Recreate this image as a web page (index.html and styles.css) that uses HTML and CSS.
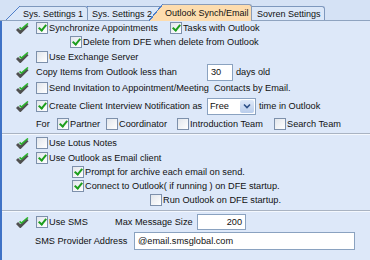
FILE: index.html
```html
<!DOCTYPE html>
<html>
<head>
<meta charset="utf-8">
<link rel="stylesheet" href="styles.css">
</head>
<body>
<div class="tabs">
  <div class="tab t1">Sys. Settings 1</div>
  <div class="tab t2">Sys. Settings 2</div>
  <div class="tab t3 active">Outlook Synch/Email</div>
  <div class="tab t4">Sovren Settings</div>
</div>
<div class="panel">
  <div class="row h14 lead">
    <span class="mark"><svg width="13" height="11" viewBox="0 0 13 11"><path d="M1 6 L4.3 9.3 L11.5 2.2" stroke="#505050" stroke-width="3" fill="none"/><path d="M3.6 4.4 L5.4 6.2 L12 0.5" stroke="#2db42d" stroke-width="1.6" fill="none"/></svg></span>
    <label class="chk w134"><span class="cb on"></span>Synchronize Appointments</label>
    <label class="chk"><span class="cb on"></span>Tasks with Outlook</label>
  </div>
  <div class="row h14 in70">
    <label class="chk"><span class="cb on"></span>Delete from DFE when delete from Outlook</label>
  </div>
  <div class="row h16 lead">
    <span class="mark"><svg width="13" height="11" viewBox="0 0 13 11"><path d="M1 6 L4.3 9.3 L11.5 2.2" stroke="#505050" stroke-width="3" fill="none"/><path d="M3.6 4.4 L5.4 6.2 L12 0.5" stroke="#2db42d" stroke-width="1.6" fill="none"/></svg></span>
    <label class="chk"><span class="cb"></span>Use Exchange Server</label>
  </div>
  <div class="row h14 lead">
    <span class="mark"><svg width="13" height="11" viewBox="0 0 13 11"><path d="M1 6 L4.3 9.3 L11.5 2.2" stroke="#505050" stroke-width="3" fill="none"/><path d="M3.6 4.4 L5.4 6.2 L12 0.5" stroke="#2db42d" stroke-width="1.6" fill="none"/></svg></span>
    <span class="txt w171">Copy Items from Outlook less than</span>
    <span class="field w26">30</span>
    <span class="txt after">days old</span>
  </div>
  <div class="row h18 lead">
    <span class="mark"><svg width="13" height="11" viewBox="0 0 13 11"><path d="M1 6 L4.3 9.3 L11.5 2.2" stroke="#505050" stroke-width="3" fill="none"/><path d="M3.6 4.4 L5.4 6.2 L12 0.5" stroke="#2db42d" stroke-width="1.6" fill="none"/></svg></span>
    <label class="chk"><span class="cb"></span>Send Invitation to Appointment/Meeting&nbsp; Contacts by Email.</label>
  </div>
  <div class="row h18 lead">
    <span class="mark"><svg width="13" height="11" viewBox="0 0 13 11"><path d="M1 6 L4.3 9.3 L11.5 2.2" stroke="#505050" stroke-width="3" fill="none"/><path d="M3.6 4.4 L5.4 6.2 L12 0.5" stroke="#2db42d" stroke-width="1.6" fill="none"/></svg></span>
    <label class="chk w171"><span class="cb on"></span>Create Client Interview Notification as</label>
    <span class="select"><span class="sel-val">Free</span><span class="sel-btn"><svg width="8" height="6" viewBox="0 0 8 6"><path d="M1 1.5 L4 4.5 L7 1.5" stroke="#2d4f86" stroke-width="1.6" fill="none"/></svg></span></span>
    <span class="txt after">time in Outlook</span>
  </div>
  <div class="row h18 in36">
    <span class="txt w21">For</span>
    <label class="chk w49"><span class="cb on"></span>Partner</label>
    <label class="chk w71"><span class="cb"></span>Coordinator</label>
    <label class="chk w97"><span class="cb"></span>Introduction Team</label>
    <label class="chk"><span class="cb"></span>Search Team</label>
  </div>
  <div class="sep"></div>
  <div class="row h16 lead">
    <span class="mark"><svg width="13" height="11" viewBox="0 0 13 11"><path d="M1 6 L4.3 9.3 L11.5 2.2" stroke="#505050" stroke-width="3" fill="none"/><path d="M3.6 4.4 L5.4 6.2 L12 0.5" stroke="#2db42d" stroke-width="1.6" fill="none"/></svg></span>
    <label class="chk"><span class="cb"></span>Use Lotus Notes</label>
  </div>
  <div class="row h14 lead">
    <span class="mark"><svg width="13" height="11" viewBox="0 0 13 11"><path d="M1 6 L4.3 9.3 L11.5 2.2" stroke="#505050" stroke-width="3" fill="none"/><path d="M3.6 4.4 L5.4 6.2 L12 0.5" stroke="#2db42d" stroke-width="1.6" fill="none"/></svg></span>
    <label class="chk"><span class="cb on"></span>Use Outlook as Email client</label>
  </div>
  <div class="row h14 in72">
    <label class="chk"><span class="cb on"></span>Prompt for archive each email on send.</label>
  </div>
  <div class="row h14 in72">
    <label class="chk"><span class="cb on"></span>Connect to Outlook( if running ) on DFE startup.</label>
  </div>
  <div class="row h14 in150">
    <label class="chk"><span class="cb"></span>Run Outlook on DFE startup.</label>
  </div>
  <div class="sep gap"></div>
  <div class="row h20 lead">
    <span class="mark"><svg width="13" height="11" viewBox="0 0 13 11"><path d="M1 6 L4.3 9.3 L11.5 2.2" stroke="#505050" stroke-width="3" fill="none"/><path d="M3.6 4.4 L5.4 6.2 L12 0.5" stroke="#2db42d" stroke-width="1.6" fill="none"/></svg></span>
    <label class="chk w79"><span class="cb on"></span>Use SMS</label>
    <span class="txt w82">Max Message Size</span>
    <span class="field w49 num">200</span>
  </div>
  <div class="row h18 in35">
    <span class="txt w99">SMS Provider Address</span>
    <span class="field w221 tall">@email.smsglobal.com</span>
  </div>
</div>
</body>
</html>
```
FILE: styles.css
```css
html, body {
  margin: 0;
  padding: 0;
}
body {
  width: 370px;
  height: 260px;
  overflow: hidden;
  background: #dde8f9;
  font-family: "Liberation Sans", Arial, sans-serif;
  font-size: 9.2px;
  color: #111;
}
.tabs {
  display: flex;
  align-items: flex-end;
  height: 21px;
  box-sizing: border-box;
  padding-left: 20px;
  background: #d5e2f5;
  border-bottom: 1px solid #8ea3c0;
  font-size: 9px;
}
.tab {
  position: relative;
  height: 14px;
  line-height: 14px;
  box-sizing: border-box;
  border: 1px solid #7e98bd;
  border-left: none;
  border-bottom: none;
  border-radius: 0 3px 0 0;
  background: #dbe7f8;
  white-space: nowrap;
  color: #111;
}
.tab::before {
  content: "";
  position: absolute;
  left: -14px;
  top: -1px;
  bottom: 0;
  width: 14px;
  background: linear-gradient(to bottom right, transparent calc(50% - 0.7px), #4f7fc9 calc(50% - 0.7px), #4f7fc9 calc(50% + 0.5px), #dbe7f8 calc(50% + 0.5px));
}
.t1 { width: 68px; padding-left: 3px; z-index: 4; }
.t2 { width: 75px; padding-left: 4px; z-index: 3; }
.t3 { width: 89px; padding-left: 2px; z-index: 6; }
.t4 { width: 73px; padding-left: 5px; z-index: 2; }
.tab.active {
  height: 17px;
  line-height: 16px;
  margin-bottom: -1px;
  background: #fddcae;
  border-color: #8a9cb8;
}
.tab.active::before {
  background: linear-gradient(to bottom right, transparent calc(50% - 0.7px), #4f7fc9 calc(50% - 0.7px), #4f7fc9 calc(50% + 0.5px), #fddcae calc(50% + 0.5px));
}
.panel {
  border-left: 2px solid #3f72c6;
  min-height: 239px;
  background: #dde8f9;
}
.row {
  display: flex;
  align-items: center;
  white-space: nowrap;
}
.h14 { height: 14px; }
.h16 { height: 16px; }
.h18 { height: 18px; }
.h20 { height: 20px; }
.lead { padding-left: 14px; }
.in70 { padding-left: 68px; }
.in72 { padding-left: 70px; }
.in150 { padding-left: 148px; }
.in36 { padding-left: 34px; }
.in35 { padding-left: 33px; }
.mark {
  width: 13px;
  height: 11px;
  margin-right: 7px;
  display: flex;
}
.chk {
  display: flex;
  align-items: center;
  flex: none;
}
.cb {
  position: relative;
  width: 12px;
  height: 12px;
  box-sizing: border-box;
  border: 1px solid #7d90ab;
  background: linear-gradient(135deg, #e2e6ec, #ffffff);
  margin-right: 1px;
  flex: none;
}
.cb.on::after {
  content: "";
  position: absolute;
  left: 3px;
  top: 0px;
  width: 3px;
  height: 6px;
  border: solid #1d9e1d;
  border-width: 0 2px 2px 0;
  transform: rotate(40deg);
}
.txt { flex: none; }
.after { margin-left: 3px; }
.w21 { width: 21px; }
.w49 { width: 49px; }
.w71 { width: 71px; }
.w79 { width: 79px; }
.w82 { width: 82px; }
.w97 { width: 97px; }
.w99 { width: 99px; }
.w134 { width: 134px; }
.w171 { width: 171px; }
.field {
  flex: none;
  height: 16px;
  line-height: 14px;
  box-sizing: border-box;
  border: 1px solid #8aa2c0;
  background: #fff;
  padding: 0 3px;
}
.w26 { width: 26px; height: 17px; line-height: 15px; }
.w49.num { width: 49px; text-align: right; }
.w221 { width: 221px; }
.tall { height: 18px; line-height: 16px; }
.select {
  flex: none;
  display: flex;
  width: 49px;
  height: 17px;
  box-sizing: border-box;
  border: 1px solid #8aa2c0;
  background: #fff;
}
.sel-val {
  flex: 1;
  padding-left: 2px;
  line-height: 14px;
}
.sel-btn {
  width: 14px;
  margin: 1px;
  display: flex;
  align-items: center;
  justify-content: center;
  background: linear-gradient(#dfe9f8, #b9cdec);
  border-radius: 2px;
}
.sep {
  height: 1px;
  background: #a9b3c2;
  border-bottom: 1px solid #f4f8fe;
}
.sep.gap { margin-top: 3px; }
```
